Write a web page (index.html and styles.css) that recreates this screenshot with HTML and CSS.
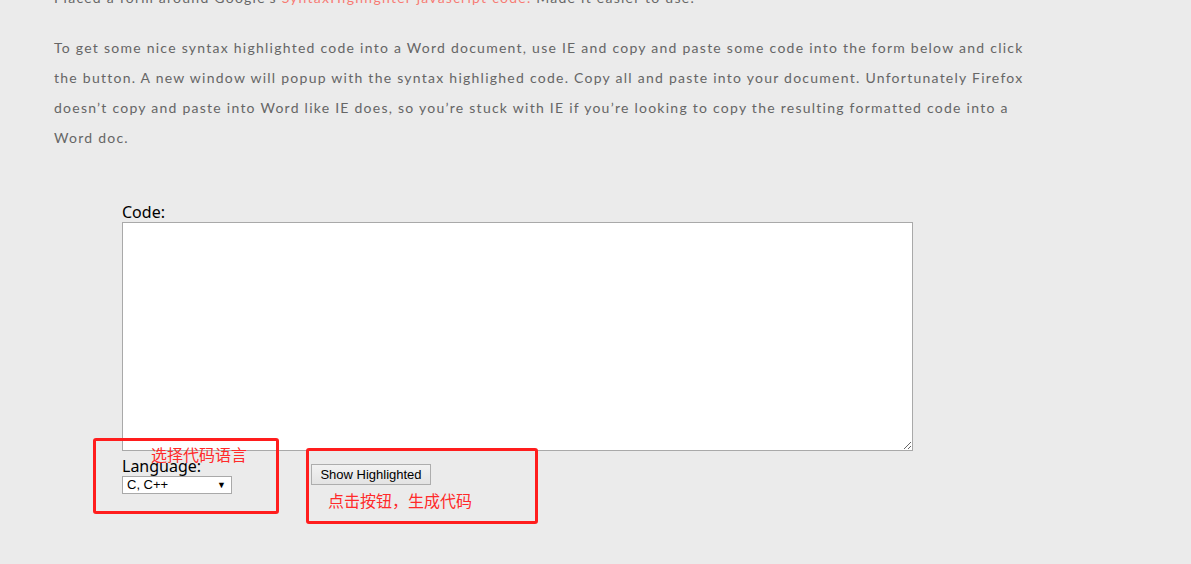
FILE: index.html
```html
<!DOCTYPE html>
<html lang="en">
<head>
<meta charset="UTF-8">
<title>Syntax Highlighter for Word</title>
<link rel="stylesheet" href="styles.css">
</head>
<body>

<div class="post">
    <p class="lead">Placed a form around Google’s <a href="#">SyntaxHighlighter javascript code.</a> Made it easier to use.</p>
    <p>To get some nice syntax highlighted code into a Word document, use IE and copy and paste some code into the form below and click the button. A new window will popup with the syntax highlighed code. Copy all and paste into your document. Unfortunately Firefox doesn’t copy and paste into Word like IE does, so you’re stuck with IE if you’re looking to copy the resulting formatted code into a Word doc.</p>
</div>

<form class="tool">
    <label class="label" for="code">Code:</label>
    <textarea id="code" class="code"></textarea>
    <div class="options">
        <div class="lang">
            <label class="label" for="lang">Language:</label>
            <span class="select-wrap">
                <select id="lang" class="select">
                    <option>C, C++</option>
                    <option>C#</option>
                    <option>CSS</option>
                    <option>Java</option>
                    <option>JavaScript</option>
                    <option>PHP</option>
                    <option>Python</option>
                    <option>SQL</option>
                    <option>XML / HTML</option>
                </select>
            </span>
        </div>
        <button type="button" class="btn">Show Highlighted</button>
    </div>

    <!-- screenshot annotations -->
    <div class="mark mark-lang"></div>
    <div class="mark mark-btn"></div>
    <span class="note note-lang">选择代码语言</span>
    <span class="note note-btn">点击按钮，生成代码</span>
</form>

</body>
</html>
```

FILE: styles.css
```css
body {
    margin: 0;
    min-height: 564px;
    background-color: #ebebeb;
    font-family: Lato, 'Open Sans', sans-serif;
}

.post {
    width: 975px;
    padding-left: 54px;
    color: #666;
    font-size: 14px;
    line-height: 30px;
    letter-spacing: 1.25px;
}

.post p {
    margin: 0 0 20px;
}

.post .lead {
    margin-top: -17px;
}

.post a {
    color: #f77b74;
    text-decoration: none;
}

.tool {
    position: relative;
    margin: 50px 0 0 122px;
    width: 792px;
}

.label {
    display: block;
    font-family: 'Noto Sans', 'Open Sans', sans-serif;
    font-size: 16px;
    line-height: 19px;
    color: #000;
}

.code {
    display: block;
    box-sizing: border-box;
    width: 791px;
    height: 229px;
    margin: 0;
    border: 1px solid #a9a9a9;
    background: #fff;
}

.options {
    display: flex;
    align-items: center;
    padding-top: 6px;
}

.lang {
    width: 189px;
}

.select-wrap {
    position: relative;
    display: block;
    width: 110px;
}

.select {
    display: block;
    box-sizing: border-box;
    width: 110px;
    height: 18px;
    margin: 0;
    padding: 0 0 0 4px;
    border: 1px solid #a9a9a9;
    background: #fff;
    font-family: 'Liberation Sans', Arial, sans-serif;
    font-size: 13px;
    line-height: 16px;
    color: #000;
    -webkit-appearance: none;
    appearance: none;
    border-radius: 0;
}

.select-wrap::after {
    content: '\25BC';
    position: absolute;
    right: 6px;
    top: 2px;
    font-size: 9px;
    line-height: 14px;
    color: #000;
    pointer-events: none;
}

.btn {
    box-sizing: border-box;
    width: 120px;
    height: 21px;
    margin-top: -2px;
    padding: 0;
    border: 1px solid #adadad;
    background: linear-gradient(#f2f2f2, #e3e3e3);
    font-family: 'Liberation Sans', Arial, sans-serif;
    font-size: 13px;
    color: #000;
}

.mark {
    position: absolute;
    border: 3px solid #ff1d1d;
    border-radius: 3px;
}

.mark-lang {
    left: -29px;
    top: 235px;
    width: 180px;
    height: 70px;
}

.mark-btn {
    left: 184px;
    top: 245px;
    width: 226px;
    height: 70px;
}

.note {
    position: absolute;
    font-family: 'Noto Sans CJK SC', sans-serif;
    font-size: 16px;
    line-height: 16px;
    color: #ff2a2a;
    white-space: nowrap;
}

.note-lang {
    left: 29px;
    top: 243px;
}

.note-btn {
    left: 206px;
    top: 289px;
}
```
